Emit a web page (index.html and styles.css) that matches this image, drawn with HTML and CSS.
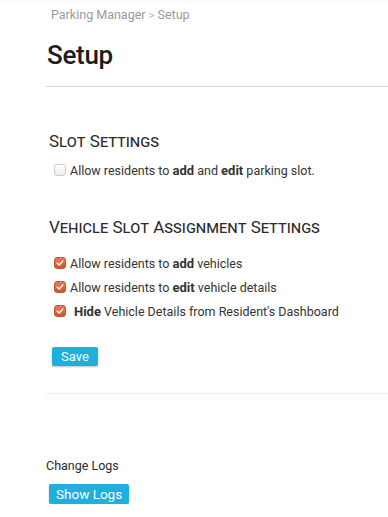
FILE: index.html
```html
<!DOCTYPE html>
<html lang="en">
<head>
    <meta charset="UTF-8">
    <meta name="viewport" content="width=device-width, initial-scale=1.0">
    <title>Setup - Parking Manager</title>
    <link rel="stylesheet" href="styles.css">
</head>
<body>
    <div class="topstrip"></div>
    <div class="page">
        <div class="breadcrumb">
            <span>Parking Manager</span>
            <span class="sep">&gt;</span>
            <span>Setup</span>
        </div>
        <h1 class="page-title">Setup</h1>
        <hr class="rule">

        <div class="settings">
            <h3 class="section-title">Slot Settings</h3>
            <label class="check-row">
                <span class="box"></span>
                <span>Allow residents to <b>add</b> and <b>edit</b> parking slot.</span>
            </label>

            <h3 class="section-title second">Vehicle Slot Assignment Settings</h3>
            <label class="check-row">
                <span class="box checked">
                    <svg viewBox="0 0 12 12"><path d="M2.6 6.2 L5 8.4 L9.4 3.6" /></svg>
                </span>
                <span>Allow residents to <b>add</b> vehicles</span>
            </label>
            <label class="check-row">
                <span class="box checked">
                    <svg viewBox="0 0 12 12"><path d="M2.6 6.2 L5 8.4 L9.4 3.6" /></svg>
                </span>
                <span>Allow residents to <b>edit</b> vehicle details</span>
            </label>
            <label class="check-row">
                <span class="box checked">
                    <svg viewBox="0 0 12 12"><path d="M2.6 6.2 L5 8.4 L9.4 3.6" /></svg>
                </span>
                <span class="pad"><b>Hide</b> Vehicle Details from Resident's Dashboard</span>
            </label>

            <button class="btn save">Save</button>
        </div>

        <hr class="rule light">

        <div class="logs">
            <p class="logs-title">Change Logs</p>
            <button class="btn">Show Logs</button>
        </div>
    </div>
</body>
</html>
```

FILE: styles.css
```css
/* Basic Reset */
* {
    margin: 0;
    padding: 0;
    box-sizing: border-box;
}

body {
    font-family: Roboto, "Liberation Sans", sans-serif;
    font-size: 12.5px;
    color: #333;
    background: #fff;
}

.topstrip {
    height: 3px;
    background: #fafafa;
}

.page {
    padding-left: 46px;
}

/* Header */
.breadcrumb {
    padding: 4px 0 0 5px;
    color: #9a9a9a;
    font-size: 12.5px;
    line-height: 16px;
}

.breadcrumb .sep {
    font-size: 11px;
    color: #b5b5b5;
}

.page-title {
    margin: 17px 0 0 1px;
    font-size: 26px;
    font-weight: 500;
    letter-spacing: -0.3px;
    line-height: 28px;
    color: #1d1d1d;
}

.rule {
    border: none;
    border-top: 1px solid #d4d4d4;
    margin-top: 17px;
}

.rule.light {
    border-top-color: #ececec;
    margin-top: 27px;
}

/* Settings */
.settings {
    padding: 44px 0 0 3px;
}

.section-title {
    font-size: 17px;
    font-weight: 400;
    font-variant: small-caps;
    color: #2a2a2a;
    line-height: 20px;
    margin-bottom: 7px;
}

.section-title.second {
    margin-top: 35px;
    margin-bottom: 14px;
}

.check-row {
    display: flex;
    align-items: center;
    height: 24px;
    padding-left: 5px;
    color: #333;
}

.check-row b {
    font-weight: 700;
    font-size: 13px;
}

.box {
    width: 12px;
    height: 12px;
    margin-right: 4px;
    border: 1px solid #c9c9c9;
    border-radius: 3px;
    background: linear-gradient(#ffffff, #ececec);
    display: flex;
    align-items: center;
    justify-content: center;
}

.box.checked {
    border-color: #c4562f;
    background: linear-gradient(#e37d57, #c95a33);
}

.box svg {
    width: 12px;
    height: 12px;
}

.box svg path {
    fill: none;
    stroke: #fff;
    stroke-width: 1.8;
    stroke-linecap: round;
    stroke-linejoin: round;
}

.pad {
    padding-left: 4px;
}

/* Buttons */
.btn {
    display: inline-block;
    background: #1eb0dc;
    color: #fff;
    border: none;
    border-radius: 2px;
    font-family: Roboto, "Liberation Sans", sans-serif;
    font-size: 13px;
    height: 19px;
    padding: 0 9px;
    box-shadow: 0 1px 2px rgba(0, 0, 0, 0.25);
    cursor: pointer;
}

.save {
    margin: 24px 0 0 3px;
}

/* Logs */
.logs {
    padding-top: 64px;
}

.logs-title {
    font-size: 12.5px;
    line-height: 16px;
    color: #2a2a2a;
}

.logs .btn {
    margin: 10px 0 0 3px;
    font-size: 13.5px;
    padding: 0 7px;
    height: 20px;
}
```
